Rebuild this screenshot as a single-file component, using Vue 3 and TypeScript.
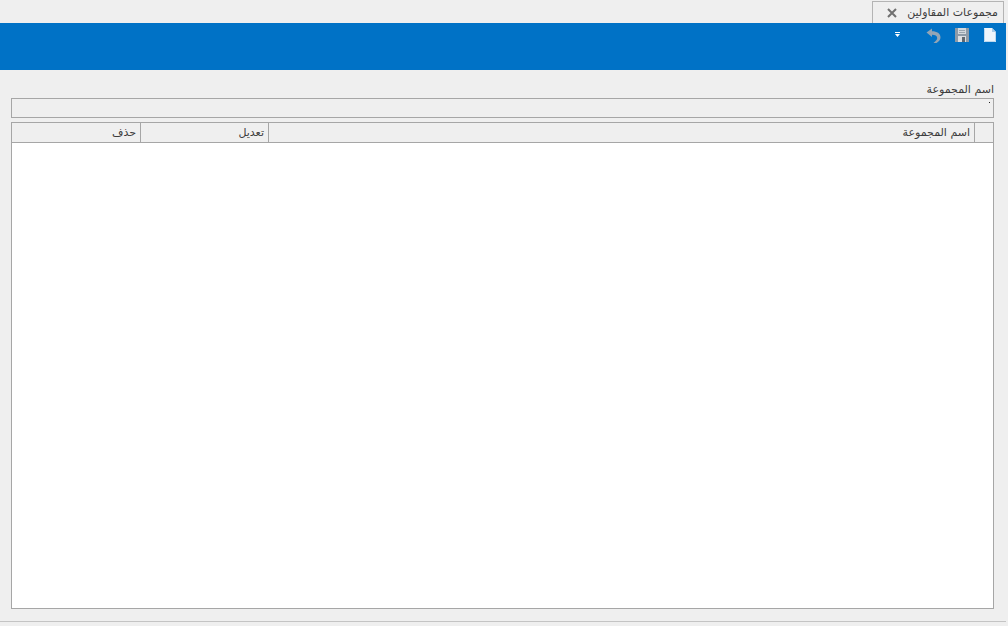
<script setup lang="ts">
const columns: { label: string; cls: string }[] = [
  { label: '', cls: 'c-ind' },
  { label: 'اسم المجموعة', cls: 'c-name' },
  { label: 'تعديل', cls: 'c-act' },
  { label: 'حذف', cls: 'c-del' },
]
</script>

<template>
  <div class="page">
    <div class="strip">
      <div class="tab">
        <svg class="close" width="10" height="10" viewBox="0 0 10 10">
          <path d="M1 1 9 9M9 1 1 9" stroke="#707070" stroke-width="2" fill="none" />
        </svg>
        <span class="tab-title">مجموعات المقاولين</span>
      </div>
    </div>
    <div class="ribbon">
      <svg class="menu" width="5" height="5" viewBox="0 0 5 5">
        <path d="M0 0H5V1H0ZM0 2H5L2.500 5Z" fill="#fff" />
      </svg>
      <svg class="ic undo" width="15" height="15" viewBox="0 0 15 15">
        <path d="M.5 4.500 6 .5V3.200C11 3.200 14.500 5.500 14.500 9.200 14.500 11.500 13 13.500 10.500 15H7.500C10 13 11.200 11.500 11.200 10 11.200 8 9 6.800 6 6.800V9Z" fill="#93a5b5" />
      </svg>
      <svg class="ic save" width="14" height="14" viewBox="0 0 14 14">
        <path d="M0 0H14V14H0Z" fill="#8d9ba8" />
        <path d="M3 0H11V6H3Z" fill="#d3d9de" />
        <path d="M4 2H10V3H4ZM4 4H10V5H4Z" fill="#9aa6b0" />
        <path d="M3 8H11V14H3Z" fill="#dcdfe2" />
        <path d="M7 9H10V14H7Z" fill="#5f6870" />
      </svg>
      <svg class="ic doc" width="12" height="14" viewBox="0 0 12 14">
        <path d="M0 0H8L12 4V14H0Z" fill="#eef5fb" />
        <path d="M8 0V4H12Z" fill="#a9cbe8" />
        <path d="M.5 .5V13.500H11.500V4" stroke="#bcd8ef" fill="none" />
      </svg>
    </div>
    <div class="body">
      <label class="field-label">اسم المجموعة</label>
      <div class="input"><span class="dot"></span></div>
      <div class="grid">
        <div class="head">
          <div v-for="c in columns" :key="c.cls" class="cell" :class="c.cls">{{ c.label }}</div>
        </div>
      </div>
    </div>
    <div class="footer"></div>
  </div>
</template>

<style>
html, body { margin: 0; background: #efefef; }
</style>

<style scoped>
.page {
  width: 1008px;
  height: 626px;
  background: #efefef;
  font-family: "DejaVu Sans", sans-serif;
  font-size: 11px;
  color: #3c3c3c;
  display: flex;
  flex-direction: column;
  overflow: hidden;
}
.strip {
  flex: none;
  height: 23px;
  display: flex;
  justify-content: flex-end;
  padding: 1px 4px 0 0;
  box-sizing: border-box;
}
.tab {
  width: 132px;
  height: 22px;
  box-sizing: border-box;
  border: 1px solid #b4b4b4;
  border-bottom: 0;
  display: flex;
  align-items: center;
  justify-content: space-between;
  padding: 0 5px 0 14px;
}
.close { flex: none; }
.tab-title { direction: rtl; white-space: nowrap; }
.ribbon {
  flex: none;
  height: 47px;
  margin-right: 2px;
  background: #0072c6;
  display: flex;
  align-items: flex-start;
  justify-content: flex-end;
  padding: 5px 10px 0 0;
  box-sizing: border-box;
}
.ic { flex: none; }
.menu { flex: none; margin: 4px 26px 0 0; }
.undo { margin-right: 14px; }
.save { margin-right: 15px; }
.body {
  flex: none;
  height: 551px;
  box-sizing: border-box;
  display: flex;
  flex-direction: column;
  padding: 12px 14px 12px 11px;
}
.field-label {
  flex: none;
  height: 16px;
  line-height: 16px;
  direction: rtl;
  white-space: nowrap;
}
.input {
  flex: none;
  height: 20px;
  box-sizing: border-box;
  border: 1px solid #a6a6a6;
  position: relative;
}
.dot {
  position: absolute;
  right: 3px;
  top: 3px;
  width: 1px;
  height: 1px;
  background: #222;
}
.grid {
  flex: none;
  margin-top: 4px;
  height: 487px;
  box-sizing: border-box;
  border: 1px solid #a6a6a6;
  background: #fff;
}
.head {
  height: 20px;
  box-sizing: border-box;
  display: flex;
  flex-direction: row-reverse;
  background: #efefef;
  border-bottom: 1px solid #a6a6a6;
}
.cell {
  box-sizing: border-box;
  height: 100%;
  line-height: 19px;
  padding-right: 4px;
  direction: rtl;
  white-space: nowrap;
  border-left: 1px solid #a6a6a6;
}
.c-ind { width: 19px; }
.c-name { width: 706px; }
.c-act { width: 128px; }
.c-del { width: 128px; border-left: 0; }
.footer {
  flex: none;
  height: 1px;
  margin: 0 2px 0 0;
  background: #c4c4c4;
}
</style>
